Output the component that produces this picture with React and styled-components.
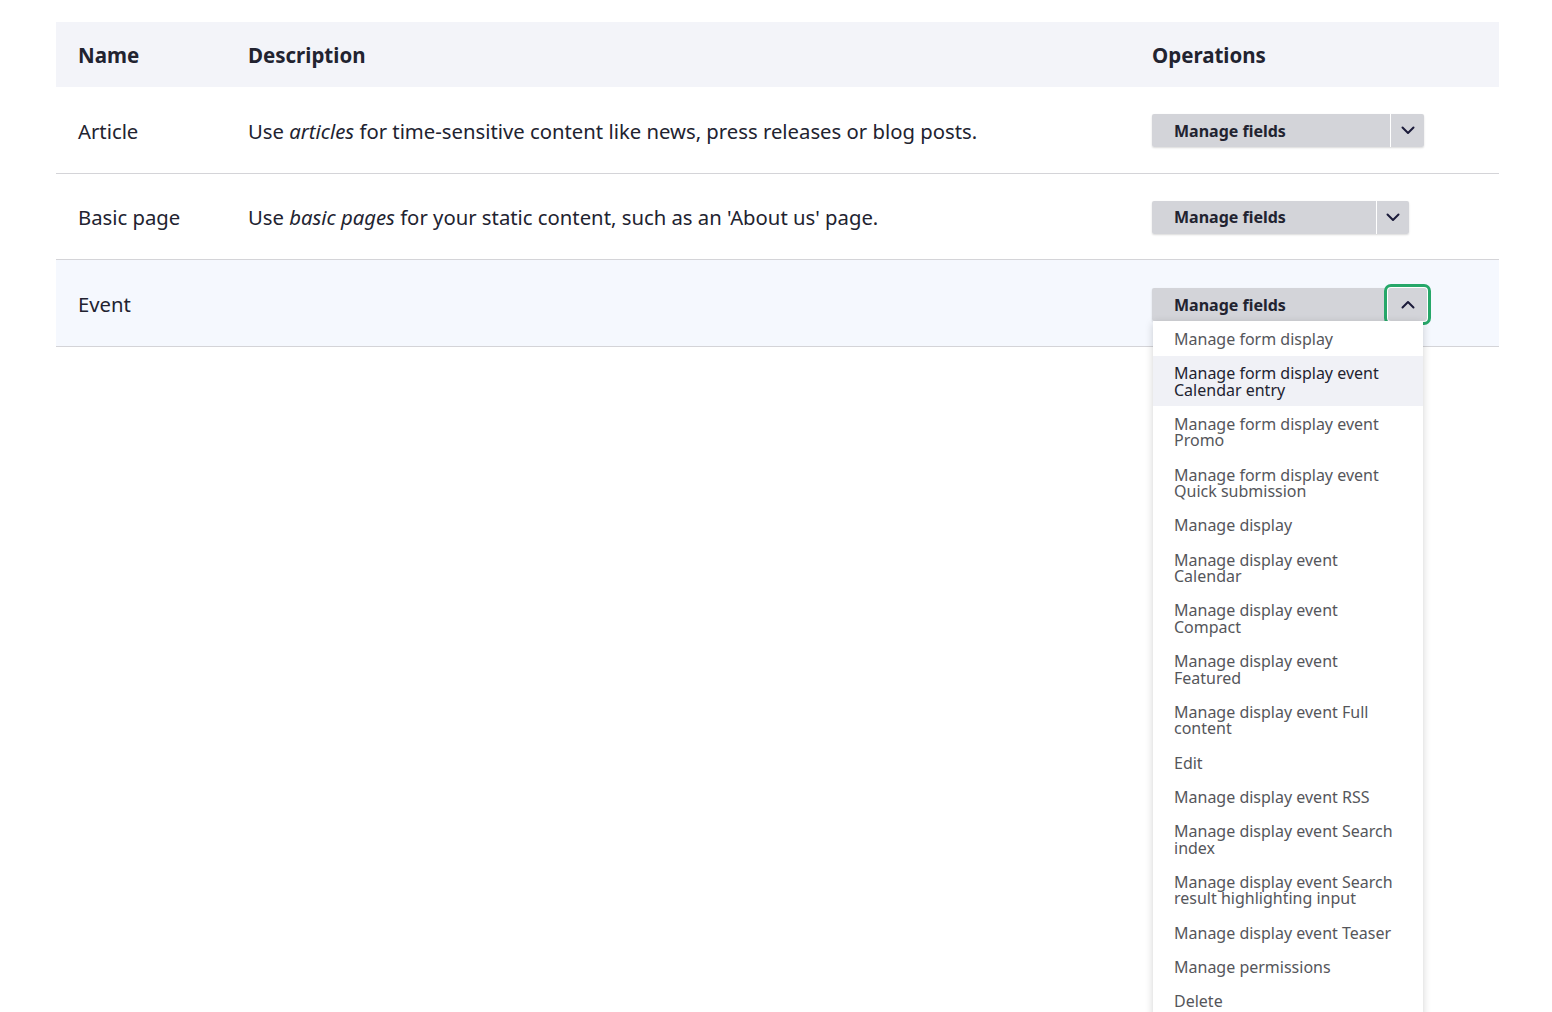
import styled, { createGlobalStyle, css } from "styled-components";

const GlobalStyle = createGlobalStyle`
  body {
    margin: 0;
    padding: 0;
    background: #fff;
    font-family: "Noto Sans", "Open Sans", sans-serif;
    color: #222330;
  }
`

const Page = styled.div`
  box-sizing: border-box;
  height: 1012px;
  overflow: hidden;
  padding: 22px 53px 0 56px;
`

const Table = styled.div`
  display: grid;
  grid-template-columns: 170px 904px 1fr;
`

const HeadCell = styled.div`
  background: #f3f4f9;
  height: 65px;
  display: flex;
  align-items: center;
  padding-left: 22px;
  font-size: 20.5px;
  font-weight: 700;
`

const Cell = styled.div`
  height: 86.6px;
  box-sizing: border-box;
  display: flex;
  align-items: center;
  padding-left: 22px;
  padding-top: 2px;
  font-size: 20.3px;
  border-bottom: 1px solid #d4d4d8;
  background: ${props => props.active ? "#f5f8fe" : "#fff"};
`

const Text = styled.span`
  white-space: pre-wrap;
`

const ButtonGroup = styled.div`
  position: relative;
  display: flex;
  height: 33px;
  margin-top: ${props => props.open ? "2px" : "0"};
  border-radius: 2px;
  box-shadow: 0 1px 2px rgba(0, 0, 0, 0.15);
`

const MainButton = styled.button`
  width: ${props => props.w}px;
  height: 33px;
  border: 0;
  padding: 0 0 0 22px;
  text-align: left;
  background: #d3d4d9;
  color: #222330;
  font-family: inherit;
  font-size: 16px;
  font-weight: 700;
  border-radius: 2px 0 0 2px;
  border-right: 1px solid #fff;
`

const Toggle = styled.button`
  width: ${props => props.w}px;
  height: 33px;
  border: 0;
  padding: 0;
  background: #d3d4d9;
  border-radius: 0 2px 2px 0;
  display: flex;
  align-items: center;
  justify-content: center;
  ${props => props.focused && css`
    outline: 3px solid #26a769;
    outline-offset: 1px;
    border-radius: 3px;
    box-shadow: 0 0 0 1px #fff;
  `}
`

const Menu = styled.ul`
  position: absolute;
  top: 33px;
  left: 1px;
  width: 270px;
  margin: 0;
  padding: 0;
  list-style: none;
  background: #fff;
  box-shadow: 0 2px 8px rgba(0, 0, 0, 0.18);
  z-index: 5;
`

const MenuItem = styled.li`
  padding: 9.3px 21px 8.3px;
  font-size: 16px;
  line-height: 16.6px;
  color: ${props => props.hover ? "#222330" : "#55565b"};
  background: ${props => props.hover ? "#f0f1f6" : "#fff"};
`

const Chevron = ({ up }) => (
  <svg width="14" height="9" viewBox="0 0 14 9" fill="none">
    <path
      d={up ? "M1.5 7.5 L7 2 L12.5 7.5" : "M1.5 1.5 L7 7 L12.5 1.5"}
      stroke="#1b1b3a"
      strokeWidth="2"
      strokeLinecap="round"
      strokeLinejoin="round"
    />
  </svg>
)

const menuItems = [
  "Manage form display",
  "Manage form display event Calendar entry",
  "Manage form display event Promo",
  "Manage form display event Quick submission",
  "Manage display",
  "Manage display event Calendar",
  "Manage display event Compact",
  "Manage display event Featured",
  "Manage display event Full content",
  "Edit",
  "Manage display event RSS",
  "Manage display event Search index",
  "Manage display event Search result highlighting input",
  "Manage display event Teaser",
  "Manage permissions",
  "Delete",
]

const rows = [
  {
    name: "Article",
    desc: <>Use <em>articles</em> for time-sensitive content like news, press releases or blog posts.</>,
    main: 239,
    toggle: 33,
  },
  {
    name: "Basic page",
    desc: <>Use <em>basic pages</em> for your static content, such as an 'About us' page.</>,
    main: 225,
    toggle: 32,
  },
  {
    name: "Event",
    desc: null,
    main: 236,
    toggle: 39,
    open: true,
  },
]

const App = () => {
  return (
    <Page>
      <GlobalStyle />
      <Table>
        <HeadCell>Name</HeadCell>
        <HeadCell>Description</HeadCell>
        <HeadCell>Operations</HeadCell>
        {rows.map(row => [
          <Cell key={row.name + "n"} active={row.open}>{row.name}</Cell>,
          <Cell key={row.name + "d"} active={row.open}>
            {row.desc && <Text>{row.desc}</Text>}
          </Cell>,
          <Cell key={row.name + "o"} active={row.open}>
            <ButtonGroup open={row.open}>
              <MainButton w={row.main}>Manage fields</MainButton>
              <Toggle w={row.toggle} focused={row.open}>
                <Chevron up={row.open} />
              </Toggle>
              {row.open && (
                <Menu>
                  {menuItems.map((item, i) => (
                    <MenuItem key={item} hover={i === 1}>{item}</MenuItem>
                  ))}
                </Menu>
              )}
            </ButtonGroup>
          </Cell>,
        ])}
      </Table>
    </Page>
  )
}

export default App
